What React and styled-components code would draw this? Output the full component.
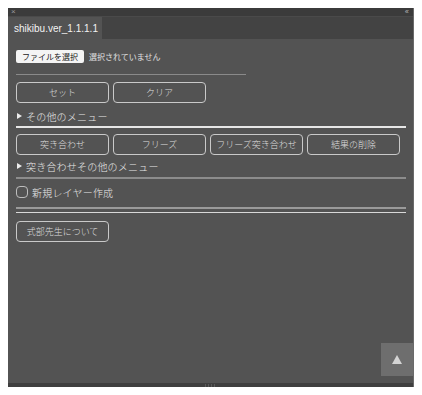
import React from 'react';
import styled, { createGlobalStyle } from 'styled-components';

const GlobalStyle = createGlobalStyle`
  body {
    margin: 8px;
    background: #ffffff;
    font-family: "Noto Sans CJK JP", "Noto Sans", sans-serif;
    font-weight: 300;
  }
`;

const Frame = styled.div`
  width: 406px;
  height: 379px;
  display: flex;
  flex-direction: column;
  background-color: #535353;
  border-right: 1px solid #6a6a6a;
  box-sizing: border-box;
`;

const TitleStrip = styled.div`
  height: 8px;
  flex: none;
  background-color: #3b3b3b;
  display: flex;
  justify-content: space-between;
  align-items: center;
  padding: 0 5px 0 3px;
  color: #9a9a9a;
  font-family: "Liberation Sans", sans-serif;
  font-size: 8px;
  line-height: 8px;
`;

const Chevrons = styled.span`
  font-size: 8px;
  letter-spacing: -1px;
  color: #b0b0b0;
`;

const TabBar = styled.div`
  height: 23px;
  flex: none;
  background-color: #434343;
  display: flex;
  border-top: 1px solid #4a4a4a;
  box-sizing: border-box;
`;

const Tab = styled.div`
  width: 94px;
  background-color: #535353;
  color: #f2f2f2;
  font-family: "Liberation Sans", sans-serif;
  font-size: 10px;
  display: flex;
  align-items: center;
  padding-left: 6px;
  box-sizing: border-box;
`;

const Content = styled.div`
  flex: 1;
  position: relative;
  padding: 11px 8px 0 8px;
  display: flex;
  flex-direction: column;
`;

const BottomStrip = styled.div`
  height: 4px;
  flex: none;
  background-color: #3f3f3f;
  display: flex;
  justify-content: center;
`;

const Grip = styled.div`
  width: 12px;
  height: 3px;
  margin-top: 1px;
  background: repeating-linear-gradient(90deg, #5a5a5a 0 1px, transparent 1px 3px);
`;

const FileRow = styled.div`
  display: flex;
  align-items: center;
  gap: 5px;
  height: 13px;
`;

const FileButton = styled.span`
  background: #f4f4f4;
  color: #222;
  font-size: 8px;
  font-weight: 400;
  line-height: 13px;
  padding: 0 6px;
  border-radius: 2px;
`;

const FileStatus = styled.span`
  color: #e0e0e0;
  font-size: 8px;
  font-weight: 400;
`;

const Rule = styled.div`
  margin-top: ${(p) => p.$top}px;
  width: ${(p) => p.$width || '390px'};
  height: ${(p) => p.$h || 1}px;
  background-color: ${(p) => p.$color};
`;

const ButtonRow = styled.div`
  margin-top: ${(p) => p.$top}px;
  display: flex;
  gap: 4px;
`;

const Btn = styled.div`
  width: 93px;
  height: 21px;
  box-sizing: border-box;
  border: 1px solid #c9c9c9;
  border-radius: 4px;
  color: #dedede;
  font-size: 9px;
  display: flex;
  align-items: center;
  justify-content: center;
  white-space: nowrap;
`;

const Toggle = styled.div`
  margin-top: ${(p) => p.$top}px;
  height: 14px;
  display: flex;
  align-items: center;
  gap: 4px;
  color: #e8e8e8;
  font-size: 10px;
  letter-spacing: 0.2px;
  padding-left: 1px;
`;

const Arrow = styled.span`
  width: 0;
  height: 0;
  border-top: 3px solid transparent;
  border-bottom: 3px solid transparent;
  border-left: 5px solid #ececec;
`;

const CheckRow = styled.label`
  margin-top: 6px;
  height: 14px;
  display: flex;
  align-items: center;
  gap: 4px;
  color: #e8e8e8;
  font-size: 10px;
  letter-spacing: 0.2px;
`;

const Box = styled.span`
  width: 10px;
  height: 10px;
  border: 1px solid #bdbdbd;
  border-radius: 4px;
`;

const ScrollTop = styled.div`
  position: absolute;
  right: 0;
  bottom: 7px;
  width: 32px;
  height: 33px;
  background-color: #6e6e6e;
  display: flex;
  align-items: center;
  justify-content: center;
`;

const App = () => {
  return (
    <>
      <GlobalStyle />
      <Frame>
        <TitleStrip>
          <span>×</span>
          <Chevrons>‹‹</Chevrons>
        </TitleStrip>
        <TabBar>
          <Tab>shikibu.ver_1.1.1.1</Tab>
        </TabBar>
        <Content>
          <FileRow>
            <FileButton>ファイルを選択</FileButton>
            <FileStatus>選択されていません</FileStatus>
          </FileRow>
          <Rule $top={11} $width="230px" $color="#8a8a8a" />
          <ButtonRow $top={7}>
            <Btn>セット</Btn>
            <Btn>クリア</Btn>
          </ButtonRow>
          <Toggle $top={6}>
            <Arrow />
            その他のメニュー
          </Toggle>
          <Rule $top={3} $h={2} $color="#e6e6e6" />
          <ButtonRow $top={6}>
            <Btn>突き合わせ</Btn>
            <Btn>フリーズ</Btn>
            <Btn>フリーズ突き合わせ</Btn>
            <Btn>結果の削除</Btn>
          </ButtonRow>
          <Toggle $top={4}>
            <Arrow />
            突き合わせその他のメニュー
          </Toggle>
          <Rule $top={4} $h={2} $color="#8c8c8c" />
          <CheckRow>
            <Box />
            新規レイヤー作成
          </CheckRow>
          <Rule $top={8} $h={2} $color="#9a9a9a" />
          <Rule $top={3} $h={1} $color="#d8d8d8" />
          <ButtonRow $top={8}>
            <Btn>式部先生について</Btn>
          </ButtonRow>
          <ScrollTop>
            <svg width="10" height="9" viewBox="0 0 10 9">
              <path d="M5 0 L10 9 L0 9 Z" fill="#d4d4d4" />
            </svg>
          </ScrollTop>
        </Content>
        <BottomStrip>
          <Grip />
        </BottomStrip>
      </Frame>
    </>
  );
};

export default App;
